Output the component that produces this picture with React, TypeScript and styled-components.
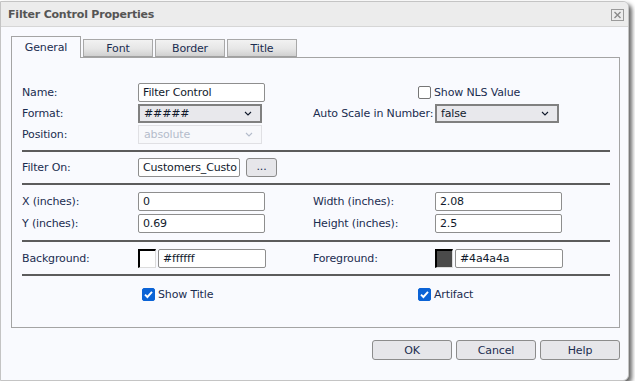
import React from "react"
import styled, { createGlobalStyle } from "styled-components"

const GlobalStyle = createGlobalStyle`
  html, body {
    margin: 0;
    padding: 0;
    background: #ffffff;
  }
  body {
    font-family: "DejaVu Sans", Verdana, sans-serif;
    font-size: 11px;
    letter-spacing: -0.15px;
    color: #1b2d50;
  }
`

const Dialog = styled.div`
  width: 627px;
  height: 378px;
  margin-top: 1px;
  border: 1px solid #c4c4c4;
  border-radius: 0 6px 6px 0;
  background: #f9fafe;
  box-shadow: 3px 3px 4px rgba(0, 0, 0, 0.6);
  display: flex;
  flex-direction: column;
  overflow: hidden;
`

const TitleBar = styled.div`
  height: 24px;
  flex: none;
  background: #ececec;
  border-bottom: 1px solid #d6d6d6;
  display: flex;
  align-items: center;
  justify-content: space-between;
  padding: 0 4px 0 7px;
`

const Title = styled.span`
  font-weight: bold;
  font-size: 11px;
  letter-spacing: -0.2px;
  color: #555555;
`

const CloseBox = styled.div`
  width: 11px;
  height: 10px;
  border: 1px solid #9a9a9a;
  display: flex;
  align-items: center;
  justify-content: center;
  margin-top: 2px;
`

const Body = styled.div`
  padding: 10px 8px 0 10px;
  display: flex;
  flex-direction: column;
`

const TabRow = styled.div`
  display: flex;
  align-items: flex-end;
  gap: 2px;
  height: 20px;
`

const Tab = styled.div<{ active?: boolean }>`
  width: 68px;
  height: ${p => (p.active ? "20px" : "16px")};
  border: 1px solid ${p => (p.active ? "#a4a4a4" : "#a8a8a8")};
  border-bottom: ${p => (p.active ? "none" : "1px solid #a0a0a0")};
  background: ${p =>
    p.active ? "#f9fafe" : "linear-gradient(#f2f2f2 0%, #e6e6e6 55%, #d0d0d0 100%)"};
  display: flex;
  justify-content: center;
  align-items: center;
  padding-bottom: ${p => (p.active ? "1px" : "0")};
  position: relative;
  z-index: ${p => (p.active ? 2 : 0)};
  margin-bottom: ${p => (p.active ? "-1px" : "0")};
`

const Panel = styled.div`
  box-sizing: border-box;
  height: 271px;
  border: 1px solid #a4a4a4;
  padding: 25px 9px 0 10px;
  display: flex;
  flex-direction: column;
`

const Grid = styled.div<{ gap?: number }>`
  display: grid;
  grid-template-columns: 116px 127px 48px 122px 127px;
  grid-auto-rows: 19px;
  row-gap: ${p => p.gap ?? 2}px;
  align-items: center;
`

const Label = styled.span<{ col?: number }>`
  grid-column: ${p => p.col ?? 1};
  white-space: nowrap;
`

const TextInput = styled.div<{ col?: number; w?: number }>`
  grid-column: ${p => p.col ?? 2};
  box-sizing: border-box;
  width: ${p => p.w ?? 127}px;
  height: 19px;
  border: 1px solid #8e8e8e;
  border-radius: 2px;
  background: #ffffff;
  padding: 0 4px;
  display: flex;
  align-items: center;
  overflow: hidden;
  white-space: nowrap;
  color: #111a2c;
`

const Select = styled.div<{ col?: number; disabled?: boolean }>`
  grid-column: ${p => p.col ?? 2};
  box-sizing: border-box;
  width: 124px;
  height: 19px;
  border: ${p => (p.disabled ? "1px solid #e0e0e4" : "2px solid #808080")};
  background: ${p => (p.disabled ? "#f7f8fb" : "#e8e8ec")};
  color: ${p => (p.disabled ? "#b4bccb" : "#111a2c")};
  padding: 0 8px 0 ${p => (p.disabled ? "5px" : "4px")};
  display: flex;
  align-items: center;
  justify-content: space-between;
`

const Check = styled.label<{ col?: number; shift?: number }>`
  grid-column: ${p => p.col ?? 1};
  margin-left: ${p => p.shift ?? 0}px;
  display: flex;
  align-items: center;
  gap: 3px;
  white-space: nowrap;
`

const Box = styled.span<{ checked?: boolean }>`
  box-sizing: border-box;
  width: 13px;
  height: 13px;
  border-radius: 2px;
  border: 1px solid ${p => (p.checked ? "#0b63d6" : "#767676")};
  background: ${p => (p.checked ? "#0b63d6" : "#ffffff")};
  display: flex;
  align-items: center;
  justify-content: center;
`

const Rule = styled.div<{ top?: number; bottom?: number }>`
  height: 2px;
  background: #5c5c5c;
  margin: ${p => p.top ?? 6}px 0 ${p => p.bottom ?? 6}px;
`

const FieldPair = styled.div<{ col?: number; gap?: number }>`
  grid-column: ${p => p.col ?? 2} / span 2;
  display: flex;
  gap: ${p => p.gap ?? 2}px;
  align-items: center;
`

const Swatch = styled.span<{ color: string }>`
  box-sizing: border-box;
  width: 18px;
  height: 19px;
  background: ${p => p.color};
  border-top: 2px solid #000;
  border-left: 2px solid #000;
  border-right: 1px solid #dcdcdc;
  border-bottom: 1px solid #dcdcdc;
`

const SmallButton = styled.div`
  box-sizing: border-box;
  width: 31px;
  height: 19px;
  border: 1px solid #8a8a8a;
  border-radius: 3px;
  background: #e6e6ea;
  display: flex;
  align-items: center;
  justify-content: center;
  padding-bottom: 3px;
`

const Footer = styled.div`
  display: flex;
  justify-content: flex-end;
  gap: 4px;
  margin-top: 12px;
`

const Button = styled.div`
  box-sizing: border-box;
  width: 80px;
  height: 20px;
  border: 1px solid #8c8c8c;
  border-radius: 3px;
  background: #e6e6ea;
  display: flex;
  align-items: center;
  justify-content: center;
`

const Chevron = () => (
  <svg width="8" height="5" viewBox="0 0 8 5">
    <path d="M1 1 L4 4 L7 1" fill="none" stroke="currentColor" strokeWidth="1.1" />
  </svg>
)

const Tick = () => (
  <svg width="11" height="11" viewBox="0 0 11 11">
    <path d="M2 5.6 L4.4 8 L9 2.8" fill="none" stroke="#ffffff" strokeWidth="1.9" />
  </svg>
)

const App: React.FC = () => {
  return (
    <>
      <GlobalStyle />
      <Dialog>
        <TitleBar>
          <Title>Filter Control Properties</Title>
          <CloseBox>
            <svg width="9" height="8" viewBox="0 0 9 8">
              <path d="M1.5 1 L7.5 7 M7.5 1 L1.5 7" stroke="#8a8a8a" strokeWidth="1.4" />
            </svg>
          </CloseBox>
        </TitleBar>
        <Body>
          <TabRow>
            <Tab active>General</Tab>
            <Tab>Font</Tab>
            <Tab>Border</Tab>
            <Tab>Title</Tab>
          </TabRow>
          <Panel>
            <Grid>
              <Label>Name:</Label>
              <TextInput>Filter Control</TextInput>
              <Check col={5} shift={-17}>
                <Box />
                Show NLS Value
              </Check>

              <Label>Format:</Label>
              <Select>
                <span>#####</span>
                <Chevron />
              </Select>
              <Label col={4}>Auto Scale in Number:</Label>
              <Select col={5}>
                <span>false</span>
                <Chevron />
              </Select>

              <Label>Position:</Label>
              <Select disabled>
                <span>absolute</span>
                <Chevron />
              </Select>
            </Grid>

            <Rule />

            <Grid>
              <Label>Filter On:</Label>
              <FieldPair gap={6}>
                <TextInput w={102}>Customers_Custo</TextInput>
                <SmallButton>...</SmallButton>
              </FieldPair>
            </Grid>

            <Rule bottom={7} />

            <Grid gap={3}>
              <Label>X (inches):</Label>
              <TextInput>0</TextInput>
              <Label col={4}>Width (inches):</Label>
              <TextInput col={5}>2.08</TextInput>

              <Label>Y (inches):</Label>
              <TextInput>0.69</TextInput>
              <Label col={4}>Height (inches):</Label>
              <TextInput col={5}>2.5</TextInput>
            </Grid>

            <Rule top={7} bottom={7} />

            <Grid>
              <Label>Background:</Label>
              <FieldPair>
                <Swatch color="#ffffff" />
                <TextInput w={108}>#ffffff</TextInput>
              </FieldPair>
              <Label col={4}>Foreground:</Label>
              <FieldPair col={5}>
                <Swatch color="#4a4a4a" />
                <TextInput w={108}>#4a4a4a</TextInput>
              </FieldPair>
            </Grid>

            <Rule bottom={9} />

            <Grid>
              <Check col={2} shift={4}>
                <Box checked>
                  <Tick />
                </Box>
                Show Title
              </Check>
              <Check col={5} shift={-17}>
                <Box checked>
                  <Tick />
                </Box>
                Artifact
              </Check>
            </Grid>
          </Panel>
          <Footer>
            <Button>OK</Button>
            <Button>Cancel</Button>
            <Button>Help</Button>
          </Footer>
        </Body>
      </Dialog>
    </>
  )
}

export default App
